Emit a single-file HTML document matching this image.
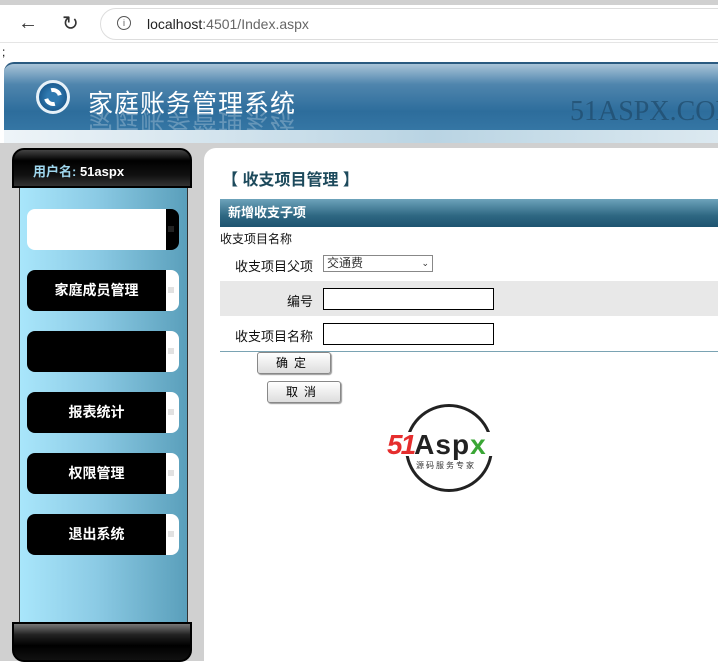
<!DOCTYPE html>
<html><head><meta charset="utf-8"><style>
*{margin:0;padding:0;box-sizing:border-box}
body{width:718px;height:661px;overflow:hidden;background:#fff;font-family:"Liberation Sans","Noto Sans CJK SC",sans-serif;position:relative}
.a{position:absolute}
.menu{position:absolute;left:27px;width:152px;height:41px}
.menu .b{position:absolute;left:0;top:0;width:139px;height:41px;background:#000;border-radius:8px 0 0 8px;color:#fff;font-size:14px;font-weight:bold;text-align:center;line-height:41px}
.menu .t{position:absolute;left:139px;top:0;width:13px;height:41px;background:#fff;border-radius:0 8px 8px 0}
.menu .t:after{content:"";position:absolute;left:2px;top:17px;width:6px;height:6px;background:radial-gradient(#888 35%,transparent 40%) 0 0/2px 2px}
.btn{position:absolute;height:22px;background:linear-gradient(#fff,#ddd);border:1px solid #888;border-radius:3px;font-size:12px;text-align:center;line-height:20px;letter-spacing:6px;box-shadow:1px 1px 1px #999}
input{position:absolute;height:22px;border:1px solid #000;background:#fff}
</style></head><body>
<div class="a" style="left:0;top:0;width:718px;height:42px;background:#fff;border-top:5px solid #d0d0d0"></div>
<div class="a" style="left:18px;top:12px;font-size:20px;color:#333">←</div>
<div class="a" style="left:62px;top:11px;font-size:20px;color:#333">↻</div>
<div class="a" style="left:100px;top:8px;width:640px;height:32px;border:1px solid #ddd;border-radius:16px;background:#fff"></div>
<div class="a" style="left:117px;top:16px;width:14px;height:14px;border:1px solid #555;border-radius:50%;font-size:9px;text-align:center;line-height:12px;color:#555">i</div>
<div class="a" style="left:147px;top:16px;font-size:14px;color:#222">localhost<span style="color:#666">:4501/Index.aspx</span></div>
<div class="a" style="left:0;top:42px;width:718px;height:1px;background:#e5e5e5"></div>
<div class="a" style="left:2px;top:45px;font-size:12px">;</div>
<div class="a" style="left:4px;top:62px;width:714px;height:70px;border-radius:10px 0 0 0;background:linear-gradient(#a9c4d8 0%,#4f85ad 30%,#2d6d9c 70%,#3677a5 100%);border-top:2px solid #2a5a80"></div>
<div class="a" style="left:4px;top:130px;width:714px;height:13px;background:linear-gradient(90deg,#eef4f8,#b9d4e3 60%,#dce9f0)"></div>
<div class="a" style="left:36px;top:80px;width:34px;height:34px;border-radius:50%;background:radial-gradient(#2f79b0 30%,#1c5c90 70%);border:3px solid #e7f1f8"></div>
<div class="a" style="left:44px;top:88px;width:18px;height:18px;border-radius:50%;border:4px solid #fff;border-left-color:transparent;border-right-color:transparent;transform:rotate(30deg)"></div>
<div class="a" style="left:88px;top:84px;font-size:25px;color:#fff;letter-spacing:1px">家庭账务管理系统</div>
<div class="a" style="left:88px;top:108px;font-size:25px;color:#fff;letter-spacing:1px;transform:scaleY(-1);opacity:.25;height:22px;overflow:hidden;line-height:22px">家庭账务管理系统</div>
<div class="a" style="left:570px;top:96px;font-size:28px;color:#1f4a6a;opacity:.7;font-family:'Liberation Serif',serif">51ASPX.COM</div>
<div class="a" style="left:0;top:143px;width:718px;height:518px;background:#d0d0d0"></div>
<div class="a" style="left:204px;top:148px;width:514px;height:513px;background:#fff;border-radius:12px 0 0 0"></div>
<div class="a" style="left:19px;top:186px;width:169px;height:440px;background:linear-gradient(90deg,#a9e6fb,#8ccbe5 45%,#5a9fbb);border:1px solid #333"></div>
<div class="a" style="left:12px;top:148px;width:180px;height:40px;background:linear-gradient(#444,#000 30%,#111 70%,#333);border-radius:12px 12px 0 0;border:2px solid #000"></div>
<div class="a" style="left:33px;top:161px;font-size:13px;font-weight:bold;color:#9fd7ee">用户名: <span style="color:#fff">51aspx</span></div>
<div class="a" style="left:12px;top:622px;width:180px;height:40px;background:linear-gradient(#777,#222 30%,#000 60%,#111);border-radius:0 0 12px 12px;border:2px solid #000"></div>
<div class="menu" style="top:209px"><div class="b" style="background:#fff"></div><div class="t" style="background:#000"></div></div>
<div class="menu" style="top:270px"><div class="b">家庭成员管理</div><div class="t"></div></div>
<div class="menu" style="top:331px"><div class="b"></div><div class="t"></div></div>
<div class="menu" style="top:392px"><div class="b">报表统计</div><div class="t"></div></div>
<div class="menu" style="top:453px"><div class="b">权限管理</div><div class="t"></div></div>
<div class="menu" style="top:514px"><div class="b">退出系统</div><div class="t"></div></div>
<div class="a" style="left:222px;top:166px;font-size:16px;font-weight:bold;color:#1d4a5c">【 收支项目管理 】</div>
<div class="a" style="left:220px;top:199px;width:498px;height:28px;background:linear-gradient(#6da3bb,#2e6782 60%,#1e5470);color:#fff;font-size:13px;font-weight:bold;line-height:28px;padding-left:8px">新增收支子项</div>
<div class="a" style="left:220px;top:230px;font-size:12px;color:#111">收支项目名称</div>
<div class="a" style="left:220px;top:256px;width:93px;text-align:right;font-size:13px;color:#111">收支项目父项</div>
<div class="a" style="left:323px;top:255px;width:110px;height:17px;border:1px solid #888;background:#fff;font-size:12px;color:#333;padding-left:3px;line-height:15px">交通费<span style="position:absolute;right:3px;font-size:9px">⌄</span></div>
<div class="a" style="left:220px;top:281px;width:498px;height:35px;background:#e8e8e8"></div>
<div class="a" style="left:220px;top:291px;width:93px;text-align:right;font-size:13px;color:#111">编号</div>
<input style="left:323px;top:288px;width:171px">
<div class="a" style="left:220px;top:326px;width:93px;text-align:right;font-size:13px;color:#111">收支项目名称</div>
<input style="left:323px;top:323px;width:171px">
<div class="a" style="left:220px;top:351px;width:498px;height:1px;background:#7aa3b3"></div>
<div class="btn" style="left:257px;top:352px;width:74px">确定</div>
<div class="btn" style="left:267px;top:381px;width:74px">取消</div>
<div class="a" style="left:405px;top:404px;width:88px;height:88px;border:3px solid #222;border-radius:50%"></div>
<div class="a" style="left:386px;top:432px;width:128px;height:24px;background:#fff"></div>
<div class="a" style="left:387px;top:429px;font-size:28px;font-weight:bold;font-style:italic;color:#e52d2d;letter-spacing:-2px">51<span style="color:#222;font-style:normal;letter-spacing:1px">Asp</span><span style="color:#3aa635;font-style:normal">x</span></div>
<div class="a" style="left:416px;top:460px;font-size:8px;color:#333;letter-spacing:2px">源码服务专家</div>
</body></html>
